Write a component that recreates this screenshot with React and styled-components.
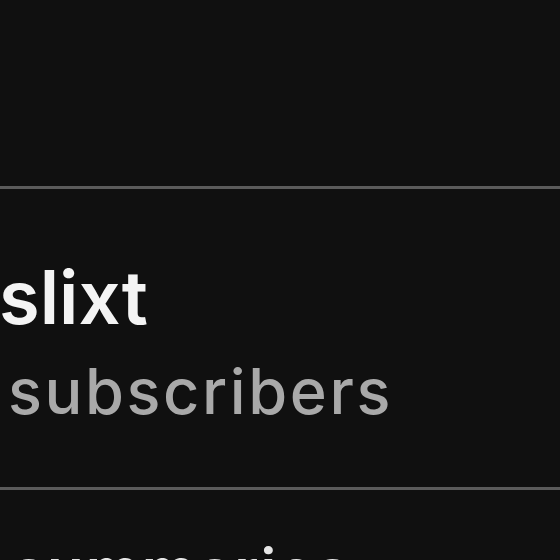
import React from "react";
import styled, { createGlobalStyle } from "styled-components";

const Global = createGlobalStyle`
  html, body { margin: 0; padding: 0; background: #101010; }
  body { width: 560px; height: 560px; overflow: hidden; }
`;

const Page = styled.div`
  width: 560px;
  height: 560px;
  overflow: hidden;
  background: #101010;
  padding-top: 186px;
  box-sizing: border-box;
  font-family: Inter, "Helvetica Neue", Arial, sans-serif;
`;

const Divider = styled.div`
  height: 3px;
  background: #5b5b5b;
`;

const Channel = styled.div`
  display: flex;
  flex-direction: column;
  padding: 73px 0 66px 0;
`;

const Name = styled.div`
  color: #f4f4f4;
  font-size: 74px;
  font-weight: 600;
  line-height: 70px;
  margin-left: -1px;
  white-space: nowrap;
`;

const Subs = styled.div`
  color: #a9a9a9;
  font-size: 63px;
  font-weight: 500;
  line-height: 60px;
  letter-spacing: 2.6px;
  margin-top: 29px;
  padding-left: 8px;
  white-space: nowrap;
`;

const Next = styled.div`
  color: #e6e6e6;
  font-size: 60px;
  font-weight: 600;
  line-height: 60px;
  letter-spacing: 2px;
  margin-top: 50px;
  padding-left: 12px;
  white-space: nowrap;
`;

export default function App() {
  return (
    <Page>
      <Global />
      <Divider />
      <Channel>
        <Name>slixt</Name>
        <Subs>subscribers</Subs>
      </Channel>
      <Divider />
      <Next>summaries</Next>
    </Page>
  );
}
